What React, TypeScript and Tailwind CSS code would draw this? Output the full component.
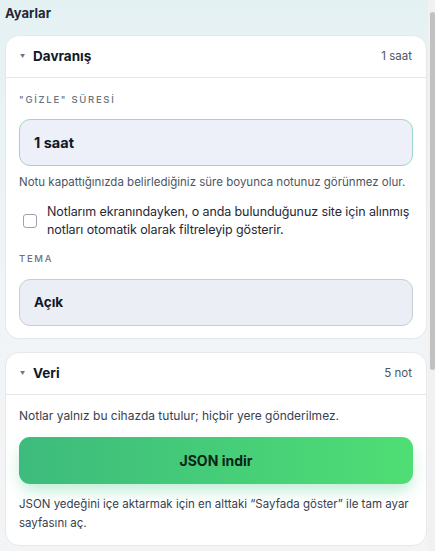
import { ReactNode } from 'react';

const font = { fontFamily: 'Inter, "Noto Sans", "Liberation Sans", sans-serif' };

function Section({ title, meta, children }: { title: string; meta: string; children: ReactNode }) {
  return (
    <section className="rounded-[14px] border border-[#e6e8ec] bg-white">
      <header className="flex h-[42px] items-center justify-between border-b border-[#e3e5e9] pl-[14px] pr-[14px]">
        <div className="flex items-center gap-[8px]">
          <span className="text-[5px] leading-none text-[#6b7280]">▼</span>
          <span className="text-[13.5px] font-bold text-[#111827]">{title}</span>
        </div>
        <span className="text-[11.5px] text-[#4b5563]">{meta}</span>
      </header>
      {children}
    </section>
  );
}

function Label({ children }: { children: ReactNode }) {
  return (
    <div className="text-[9.5px] font-medium uppercase tracking-[0.18em] text-[#6b7280]">{children}</div>
  );
}

export default function App() {
  return (
    <div style={font} className="flex h-[551px] w-[435px] overflow-hidden bg-gradient-to-b from-[#e4f1f3] via-[#f1f4f6] to-[#f3f4f6]">
      <main className="flex flex-1 flex-col pl-[5px] pr-[1px]">
        <h1 className="mt-[4px] h-[31px] text-[13px] font-bold text-[#1f2937]">Ayarlar</h1>

        <Section title="Davranış" meta="1 saat">
          <div className="pl-[13px] pr-[10px] pt-[15px] pb-[12px]">
            <Label>"Gİzle" süresİ</Label>
            <div className="mt-[12px] mr-[3px] flex h-[47px] items-center rounded-[11px] border border-[#9dd6c6] bg-[#edf0f8] px-[14px] text-[14.5px] font-bold text-[#111827]">
              1 saat
            </div>
            <p className="mt-[8px] text-[11.5px] text-[#4b5563]">
              Notu kapattığınızda belirlediğiniz süre boyunca notunuz görünmez olur.
            </p>
            <label className="mt-[11px] flex items-center gap-[10px] pl-[4px]">
              <span className="h-[14px] w-[14px] shrink-0 rounded-[3px] border border-[#9ca3af] bg-white" />
              <span className="text-[12.5px] leading-[18.5px] tracking-[-0.1px] text-[#1f2937]">
                Notlarım ekranındayken, o anda bulunduğunuz site için alınmış notları otomatik olarak filtreleyip gösterir.
              </span>
            </label>
            <div className="mt-[12px]">
              <Label>Tema</Label>
            </div>
            <div className="mt-[13px] mr-[3px] flex h-[47px] items-center rounded-[11px] border border-[#c8ccd4] bg-[#eceef5] px-[14px] text-[13.5px] font-bold text-[#111827]">
              Açık
            </div>
          </div>
        </Section>

        <div className="h-[13px]" />

        <Section title="Veri" meta="5 not">
          <div className="px-[13px] pt-[12px] pb-[12px]">
            <p className="text-[12px] text-[#374151]">Notlar yalnız bu cihazda tutulur; hiçbir yere gönderilmez.</p>
            <button className="mt-[12px] flex h-[47px] w-full items-center justify-center rounded-[11px] bg-gradient-to-r from-[#3dbb7c] to-[#4fde74] text-[14px] font-bold text-[#0b2416] shadow-[0_8px_16px_-2px_rgba(61,200,130,0.35)]">
              JSON indir
            </button>
            <p className="mt-[11px] text-[11.5px] leading-[19px] text-[#374151]">
              JSON yedeğini içe aktarmak için en alttaki “Sayfada göster” ile tam ayar sayfasını aç.
            </p>
          </div>
        </Section>
      </main>
      <div className="flex w-[7px] flex-col bg-[#f1f1f1] pt-[12px]">
        <div className="ml-[2px] h-[358px] w-[5px] rounded-full bg-[#c1c1c1]" />
      </div>
    </div>
  );
}
